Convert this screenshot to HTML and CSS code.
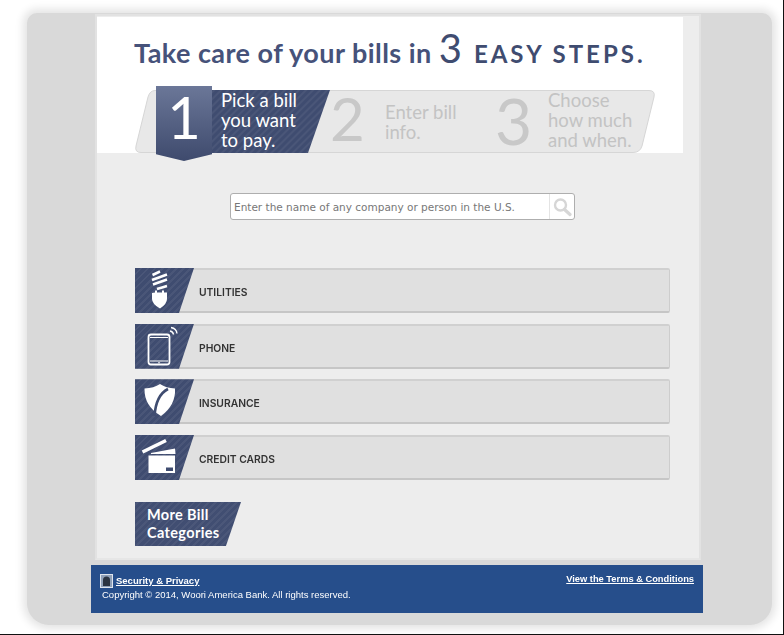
FILE: index.html
```html
<!DOCTYPE html>
<html lang="en">
<head>
<meta charset="utf-8">
<title>Pay bills</title>
<link rel="stylesheet" href="styles.css">
</head>
<body>
<div class="window">
  <main class="sheet">
    <section class="hero">
      <h1 class="title">Take care of your bills in <span class="hand-num">3</span> <span class="hand">EASY STEPS.</span></h1>
      <div class="steps">
        <svg class="steps-bg" viewBox="0 0 520 63" preserveAspectRatio="none" aria-hidden="true">
          <defs>
            <pattern id="stripe" width="5" height="5" patternUnits="userSpaceOnUse" patternTransform="rotate(45)">
              <rect width="5" height="5" fill="#3f4c70"/>
              <rect width="2" height="5" fill="#4a5678"/>
            </pattern>
          </defs>
          <path d="M20 .5H514Q520.500 .5 519 7L507 56Q505 62.500 498 62.500H6Q-.5 62.500 1 56L13 7Q15 .5 20 .5Z" fill="#e8e8e8" stroke="#d6d6d6"/>
          <path d="M60 0H195L173 63H60Z" fill="url(#stripe)"/>
        </svg>
        <div class="step step-one">
          <span class="badge">1</span>
          <span class="step-text">Pick a bill<br>you want<br>to pay.</span>
        </div>
        <div class="step step-two">
          <span class="num">2</span>
          <span class="step-text">Enter bill<br>info.</span>
        </div>
        <div class="step step-three">
          <span class="num">3</span>
          <span class="step-text">Choose<br>how much<br>and when.</span>
        </div>
      </div>
    </section>
    <section class="content">
      <div class="search">
        <span class="search-input">Enter the name of any company or person in the U.S.</span>
        <span class="search-btn">
          <svg width="20" height="20" viewBox="0 0 20 20" aria-hidden="true"><circle cx="8.500" cy="8" r="5.500" fill="none" stroke="#d6d6d6" stroke-width="2.400"/><path d="M12.500 12.500L18 17.500" stroke="#d6d6d6" stroke-width="3.200" stroke-linecap="round"/></svg>
        </span>
      </div>
      <div class="bills">
        <div class="bill">
          <span class="tile">
            <svg width="59" height="45" viewBox="0 0 59 45" aria-hidden="true">
              <path d="M17.500 7L25 3.500M17 12L32 6.500M18 16.500L32 11.500M22 21L32 18" stroke="#fff" stroke-width="2.500" fill="none"/>
              <path d="M17 25L20 24.500V22.500H22V24.500H27V22.500H29V24.500H32V31Q32 36 25 40.500Q17 36 17 31Z" fill="#fff"/>
            </svg>
          </span>
          <span class="bill-label">UTILITIES</span>
        </div>
        <div class="bill">
          <span class="tile">
            <svg width="59" height="45" viewBox="0 0 59 45" aria-hidden="true">
              <rect x="13.500" y="10.500" width="21" height="30" rx="2.500" fill="none" stroke="#fff" stroke-width="1.800"/>
              <path d="M15 13.500H33M15 37H33" stroke="#fff" stroke-width="1"/>
              <circle cx="24" cy="38.800" r=".8" fill="#fff"/>
              <path d="M35 7Q38 7.500 38.500 10.500M36 3.500Q41.500 4.500 42 9.500" fill="none" stroke="#fff" stroke-width="1.400"/>
            </svg>
          </span>
          <span class="bill-label">PHONE</span>
        </div>
        <div class="bill">
          <span class="tile">
            <svg width="59" height="45" viewBox="0 0 59 45" aria-hidden="true">
              <path d="M25 5Q31 9 40 9.500Q41 26 26 37Q9 27 9.500 9.500Q19 9 25 5Z" fill="#fff"/>
              <path d="M33 10Q21 16 19.500 37" fill="none" stroke="#3f4c70" stroke-width="2.600"/>
            </svg>
          </span>
          <span class="bill-label">INSURANCE</span>
        </div>
        <div class="bill">
          <span class="tile">
            <svg width="59" height="45" viewBox="0 0 59 45" aria-hidden="true">
              <path d="M7.500 17L31 5.500" stroke="#fff" stroke-width="3.600" fill="none"/>
              <path d="M16 18L40 13.500L40.500 19H16Z" fill="#fff"/>
              <path d="M13.500 20.500H40V38H13.500Z" fill="#fff"/>
              <rect x="31" y="32.500" width="7" height="3.500" fill="#3f4c70"/>
            </svg>
          </span>
          <span class="bill-label">CREDIT CARDS</span>
        </div>
      </div>
      <div class="more">More Bill<br>Categories</div>
    </section>
  </main>
  <footer class="footer">
    <div class="footer-top">
      <span class="security">
        <svg class="lock" width="13" height="14" viewBox="0 0 13 14" aria-hidden="true"><rect x=".5" y=".5" width="12" height="13" fill="#8fa0b8" stroke="#dfe5ee"/><path d="M3 12V6Q3 2.500 6.500 2.500T10 6V12Z" fill="#2b3442"/></svg>
        <a class="foot-link">Security &amp; Privacy</a>
      </span>
      <a class="foot-link terms">View the Terms &amp; Conditions</a>
    </div>
    <p class="copy">Copyright © 2014, Woori America Bank. All rights reserved.</p>
  </footer>
</div>
</body>
</html>
```
FILE: styles.css
```css
* { box-sizing: border-box; }
html, body { margin: 0; padding: 0; }
body {
  width: 784px;
  height: 635px;
  overflow: hidden;
  background: #fff;
  border-right: 1px solid #111;
  border-bottom: 1px solid #111;
  font-family: "Liberation Sans", Arial, sans-serif;
}
.window {
  margin: 13px 11px 0 27px;
  width: 745px;
  height: 612px;
  padding: 1px 0 0 68px;
  background: #d9d9d9;
  border-radius: 10px 10px 22px 22px;
  box-shadow: 0 0 9px 4px #e4e4e4;
  filter: blur(.35px);
}
.sheet {
  width: 606px;
  height: 546px;
  padding-top: 1px;
  background: #ededed;
  border: 2px solid #e2e2e2;
  border-bottom-color: #e6e6e6;
}
.hero {
  width: 586px;
  height: 136px;
  background: #fff;
}
.title {
  margin: 0;
  height: 73px;
  padding: 14px 0 0 37px;
  font: 700 27px/34px Lato, sans-serif;
  letter-spacing: .45px;
  color: #46527a;
  white-space: nowrap;
}
.hand-num {
  font: 400 40px/34px Lato, sans-serif;
  letter-spacing: 0;
  color: #3f4c70;
}
.hand {
  margin-left: 5px;
  font: 700 24px/34px Lato, sans-serif;
  letter-spacing: 3px;
  color: #3f4c70;
}
.steps {
  position: relative;
  display: flex;
  margin-left: 38px;
  padding-left: 21px;
  width: 520px;
  height: 63px;
}
.steps-bg {
  position: absolute;
  left: 0;
  top: 0;
  width: 520px;
  height: 63px;
}
.step {
  position: relative;
  display: flex;
  align-items: center;
  height: 63px;
  font-family: Lato, sans-serif;
}
.step-one { width: 174px; }
.step-two { width: 165px; }
.step-three { flex: 1; }
.step-text {
  margin-top: -1px;
  font-size: 18.500px;
  line-height: 19.800px;
  color: #c3c3c3;
  white-space: nowrap;
}
.step-two .step-text { margin-top: 3px; }
.step-one .step-text { color: #fff; margin-left: 9px; }
.badge {
  align-self: flex-start;
  width: 56px;
  height: 75px;
  margin-top: -4px;
  text-align: center;
  font: 400 58px/62px Lato, sans-serif;
  color: #fff;
  background: linear-gradient(#6b7798, #3e4a6d);
  clip-path: polygon(0 0, 100% 0, 100% 91%, 50% 100%, 0 91%);
}
.num {
  width: 55px;
  margin-top: -6px;
  font: 400 60px/63px Lato, sans-serif;
  color: #c8c8c8;
}
.step-three .num { width: 53px; margin-top: -2px; font-size: 64px; }
.content {
  width: 535px;
  margin-left: 38px;
  padding-top: 40px;
}
.search {
  display: flex;
  width: 345px;
  height: 27px;
  margin: 0 auto 48px;
  background: #fff;
  border: 1px solid #aeaeae;
  border-radius: 3px;
}
.search-input {
  flex: 1;
  padding-left: 3px;
  font: 10.500px/26px "DejaVu Sans", sans-serif;
  color: #777;
  white-space: nowrap;
}
.search-btn {
  display: flex;
  align-items: center;
  justify-content: center;
  width: 25px;
  border-left: 1px solid #e4e4e4;
}
.bills {
  display: flex;
  flex-direction: column;
  gap: 10.670px;
}
.bill {
  display: flex;
  align-items: center;
  height: 45px;
  background: #e0e0e0;
  border-top: 2px solid #d0d0d0;
  border-bottom: 2px solid #c6c6c6;
  border-right: 1px solid #cdcdcd;
  border-radius: 2px;
}
.tile {
  width: 59px;
  height: 45px;
  margin: -2px 5px -2px 0;
  flex: none;
  background: repeating-linear-gradient(-45deg, #3f4c70 0 3px, #4a5678 3px 5px);
  clip-path: polygon(0 0, 100% 0, 74.600% 100%, 0 100%);
}
.tile svg { display: block; }
.bill-label {
  margin-top: 3px;
  font: 600 10.300px/14px Inter, sans-serif;
  color: #333;
  white-space: nowrap;
}
.more {
  width: 106px;
  height: 44px;
  margin-top: 22px;
  padding: 4px 0 0 12px;
  font: 700 14.500px/18px Lato, sans-serif;
  letter-spacing: .35px;
  color: #fff;
  background: repeating-linear-gradient(-45deg, #414e72 0 3px, #4b5779 3px 5px);
  clip-path: polygon(0 0, 100% 0, 85.800% 100%, 0 100%);
}
.footer {
  width: 612px;
  height: 48px;
  margin: 5px 0 0 -4px;
  padding: 8px 9px 0 9px;
  background: #264e8b;
  color: #fff;
  font-size: 9.500px;
  line-height: 12px;
}
.footer-top {
  display: flex;
  justify-content: space-between;
  align-items: flex-start;
}
.security {
  display: flex;
  align-items: center;
  gap: 3px;
  margin-top: 1px;
}
.lock { flex: none; }
.foot-link {
  font-weight: 700;
  text-decoration: underline;
  color: #fff;
  white-space: nowrap;
}
.terms { font-size: 9.300px; }
.copy {
  margin: 1px 0 0 2px;
  white-space: nowrap;
}
```
